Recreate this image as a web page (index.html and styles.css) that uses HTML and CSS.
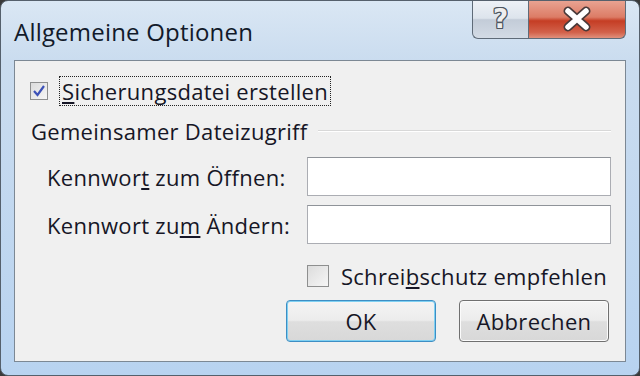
FILE: index.html
```html
<!DOCTYPE html>
<html>

<head>
    <meta charset="UTF-8">
    <title>Allgemeine Optionen</title>
    <!-- Styles  -->
    <link rel="stylesheet" href="styles.css">
</head>

<body>
    <div class="window">
        <!-- Title bar -->
        <div class="titlebar">
            <span class="title">Allgemeine Optionen</span>
            <div class="caption-buttons">
                <button class="cap help"><span>?</span></button>
                <button class="cap close">
                    <svg width="36" height="26" viewBox="0 0 36 26">
                        <path d="M9 5 L27 21 M27 5 L9 21" stroke="#4a3a3a" stroke-width="9" stroke-linecap="round" />
                        <path d="M9 5 L27 21 M27 5 L9 21" stroke="#ffffff" stroke-width="5.5" stroke-linecap="round" />
                    </svg>
                </button>
            </div>
        </div>

        <!-- Dialog content -->
        <div class="client">
            <div class="check-row first">
                <span class="box checked">
                    <svg width="16" height="16" viewBox="0 0 16 16">
                        <path d="M3 8 L6.5 12 L13 3" fill="none" stroke="#3d52b8" stroke-width="2.2" />
                    </svg>
                </span>
                <span class="focus"><u>S</u>icherungsdatei erstellen</span>
            </div>

            <div class="group-head">
                <span>Gemeinsamer Dateizugriff</span>
                <span class="rule"></span>
            </div>

            <div class="fields">
                <label for="open">Kennwor<u>t</u> zum Öffnen:</label>
                <input type="password" id="open">
                <label for="modify">Kennwort zu<u>m</u> Ändern:</label>
                <input type="password" id="modify">
            </div>

            <div class="check-row second">
                <span class="box"></span>
                <span>Schrei<u>b</u>schutz empfehlen</span>
            </div>

            <div class="buttons">
                <button class="btn default">OK</button>
                <button class="btn">Abbrechen</button>
            </div>
        </div>
    </div>
</body>

</html>
```

FILE: styles.css
```css
html,
body {
    margin: 0;
    padding: 0;
    background-color: #3a3a3a;
}

.window {
    width: 640px;
    height: 376px;
    box-sizing: border-box;
    border: 1px solid #55606c;
    border-radius: 8px;
    background: linear-gradient(to bottom, #dae7f4 0px, #cadcef 60px, #b8d3f0 100%);
    font-family: "Open Sans", sans-serif;
    color: #161626;
    overflow: hidden;
}

.titlebar {
    display: flex;
    align-items: flex-start;
    height: 59px;
}

.title {
    font-size: 24px;
    letter-spacing: 0.2px;
    margin-left: 13px;
    margin-top: 14px;
    color: #121a2a;
}

.caption-buttons {
    display: flex;
    margin-left: auto;
    margin-right: 13px;
    margin-top: -1px;
}

.cap {
    height: 39px;
    border: 1px solid #5f6b78;
    border-top: none;
    padding: 0;
    display: flex;
    align-items: center;
    justify-content: center;
}

.help {
    width: 56px;
    border-right: none;
    border-bottom-left-radius: 6px;
    background: linear-gradient(to bottom, #eef2f7 0%, #dde4ec 48%, #c3ccd8 52%, #d3dbe5 100%);
}

.help span {
    font-family: "DejaVu Sans", sans-serif;
    font-weight: bold;
    font-size: 26px;
    line-height: 26px;
    color: #eeeeee;
    text-shadow: 1px 0 0 #4d5560, -1px 0 0 #4d5560, 0 1px 0 #4d5560, 0 -1px 0 #4d5560,
        1px 1px 0 #4d5560, -1px -1px 0 #4d5560, 1px -1px 0 #4d5560, -1px 1px 0 #4d5560;
}

.close {
    width: 98px;
    border-bottom-right-radius: 6px;
    background: linear-gradient(to bottom, #e9a594 0%, #dc7c66 45%, #c53d24 55%, #d2614a 85%, #e0907c 100%);
}

.client {
    margin: 0 13px;
    height: 302px;
    box-sizing: border-box;
    border: 1px solid #7c8894;
    background-color: #f0f0f0;
    padding: 15px 14px 0 15px;
    font-size: 22px;
    letter-spacing: 0.3px;
}

.check-row {
    display: flex;
    align-items: center;
}

.box {
    width: 18px;
    height: 18px;
    box-sizing: border-box;
    border: 1px solid #8e8f8f;
    background: linear-gradient(to bottom right, #dcdcdc, #f6f6f6);
    display: flex;
    align-items: center;
    justify-content: center;
}

.first {
    height: 30px;
}

.first .focus {
    margin-left: 11px;
    padding: 0 2px;
    border: 1px dotted #222;
    line-height: 28px;
}

.group-head {
    display: flex;
    align-items: center;
    margin-top: 10px;
    height: 30px;
}

.group-head span:first-child {
    margin-left: 1px;
}

.rule {
    flex: 1;
    margin-left: 10px;
    border-top: 1px solid #d8d8d8;
    border-bottom: 1px solid #ffffff;
}

.fields {
    display: grid;
    grid-template-columns: 1fr 304px;
    row-gap: 9px;
    align-items: center;
    margin-top: 11px;
}

.fields label {
    padding-left: 17px;
}

.fields input {
    height: 39px;
    box-sizing: border-box;
    margin: 0;
    border: 1px solid #abadb3;
    border-top-color: #8f9399;
    background-color: #ffffff;
}

.second {
    justify-content: flex-end;
    margin-top: 18px;
    height: 28px;
    padding-right: 4px;
}

.second .box {
    width: 22px;
    height: 22px;
    margin-right: 12px;
}

.buttons {
    display: flex;
    justify-content: flex-end;
    gap: 23px;
    margin-top: 10px;
    padding-right: 2px;
}

.btn {
    width: 150px;
    height: 42px;
    font-family: "Open Sans", sans-serif;
    font-size: 22px;
    letter-spacing: 0.3px;
    color: #161626;
    border: 1px solid #707070;
    border-radius: 4px;
    background: linear-gradient(to bottom, #f4f4f4 0%, #ececec 48%, #dedede 52%, #d8d8d8 100%);
    box-shadow: inset 0 0 0 1px #fbfbfb;
}

.btn.default {
    border-color: #3d8ec4;
    box-shadow: inset 0 0 0 1px #7fd0f2;
}
```
